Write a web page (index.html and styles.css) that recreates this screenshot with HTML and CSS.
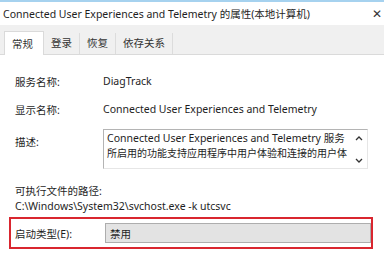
FILE: index.html
```html
<!DOCTYPE html>
<html lang="zh-CN">
<head>
  <meta charset="UTF-8" />
  <title>Connected User Experiences and Telemetry 的属性</title>
  <link rel="stylesheet" href="styles.css">
</head>
<body>

  <div class="window">
    <div class="titlebar">
      <span class="title">Connected User Experiences and Telemetry 的属性(本地计算机)</span>
      <span class="close">&#x2715;</span>
    </div>

    <!-- tabs -->
    <div class="tabs">
      <div class="tab active">常规</div>
      <div class="tab">登录</div>
      <div class="tab">恢复</div>
      <div class="tab">依存关系</div>
    </div>

    <div class="panel">
      <div class="row">
        <span class="label">服务名称:</span>
        <span class="value">DiagTrack</span>
      </div>
      <div class="row">
        <span class="label">显示名称:</span>
        <span class="value">Connected User Experiences and Telemetry</span>
      </div>
      <div class="row desc-row">
        <span class="label">描述:</span>
        <div class="desc">
          <div class="desc-text">
            <div class="line">Connected User Experiences and Telemetry 服务</div>
            <div class="line cjk">所启用的功能支持应用程序中用户体验和连接的用户体</div>
          </div>
          <div class="scroll">
            <svg class="arrow" viewBox="0 0 8 6"><path d="M1 5 L4 2 L7 5" fill="none" stroke="#333" stroke-width="1.3"/></svg>
            <svg class="arrow" viewBox="0 0 8 6"><path d="M1 1 L4 4 L7 1" fill="none" stroke="#333" stroke-width="1.3"/></svg>
          </div>
        </div>
      </div>

      <div class="path-label">可执行文件的路径:</div>
      <div class="path">C:\Windows\System32\svchost.exe -k utcsvc</div>

      <div class="startup">
        <span class="label">启动类型(E):</span>
        <div class="select">禁用</div>
      </div>
    </div>
  </div>

</body>
</html>
```

FILE: styles.css
```css
body {
  margin: 0;
  background: #fff;
  font-family: "Noto Sans", "Noto Sans CJK SC", sans-serif;
  font-size: 10.5px;
  color: #1e1e1e;
}

.window {
  width: 384px;
  height: 259px;
  border-top: 2px solid #a6d2ef;
  box-sizing: border-box;
  overflow: hidden;
}

.titlebar {
  height: 23px;
  display: flex;
  align-items: center;
  justify-content: space-between;
  padding: 0 2px 0 3px;
}

.close {
  font-size: 12px;
  color: #333;
}

.tabs {
  background: #f0f0f0;
  height: 30px;
  display: flex;
  align-items: flex-end;
  padding-left: 4px;
  border-bottom: 1px solid #dadada;
  box-sizing: border-box;
}

.tab {
  height: 21px;
  line-height: 21px;
  padding: 0 7px;
  border-right: 1px solid #dcdcdc;
  color: #333;
}

.tab.active {
  background: #fff;
  height: 23px;
  line-height: 24px;
  width: 23px;
  padding: 0 8px 0 7px;
  border: 1px solid #dadada;
  border-bottom: none;
  margin-bottom: -1px;
}

.panel {
  padding: 12px 0 0 15px;
}

.row {
  display: flex;
  align-items: center;
  height: 28px;
}

.label {
  width: 88px;
  flex-shrink: 0;
}

.desc-row {
  align-items: flex-start;
  height: auto;
  margin-top: 6px;
}

.desc-row .label {
  margin-top: 5px;
}

.desc {
  width: 265px;
  height: 40px;
  border: 1px solid #b4b4b4;
  border-right-color: #e6e6e6;
  border-bottom-color: #e6e6e6;
  display: flex;
  box-sizing: border-box;
}

.desc-text {
  flex: 1;
  min-width: 0;
  padding: 1px 0 0 3px;
  line-height: 15px;
  overflow: hidden;
}

.line {
  white-space: nowrap;
}

.line.cjk {
  font-size: 10px;
}

.scroll {
  width: 16px;
  flex-shrink: 0;
  display: flex;
  flex-direction: column;
  justify-content: space-between;
  align-items: center;
  padding: 5px 0 4px;
  box-sizing: border-box;
}

.arrow {
  display: block;
  width: 8px;
  height: 6px;
}

.path-label {
  margin-top: 14px;
}

.path {
  margin-top: 1px;
}

.startup {
  margin: 4px 0 0 -6px;
  width: 364px;
  height: 32px;
  border: 2px solid #d9262f;
  box-sizing: border-box;
  display: flex;
  align-items: center;
  padding-left: 4px;
}

.startup .label {
  width: 90px;
}

.select {
  width: 266px;
  height: 20px;
  line-height: 20px;
  background: #e3e3e3;
  border: 1px solid #adadad;
  box-sizing: border-box;
  padding-left: 4px;
}
```
